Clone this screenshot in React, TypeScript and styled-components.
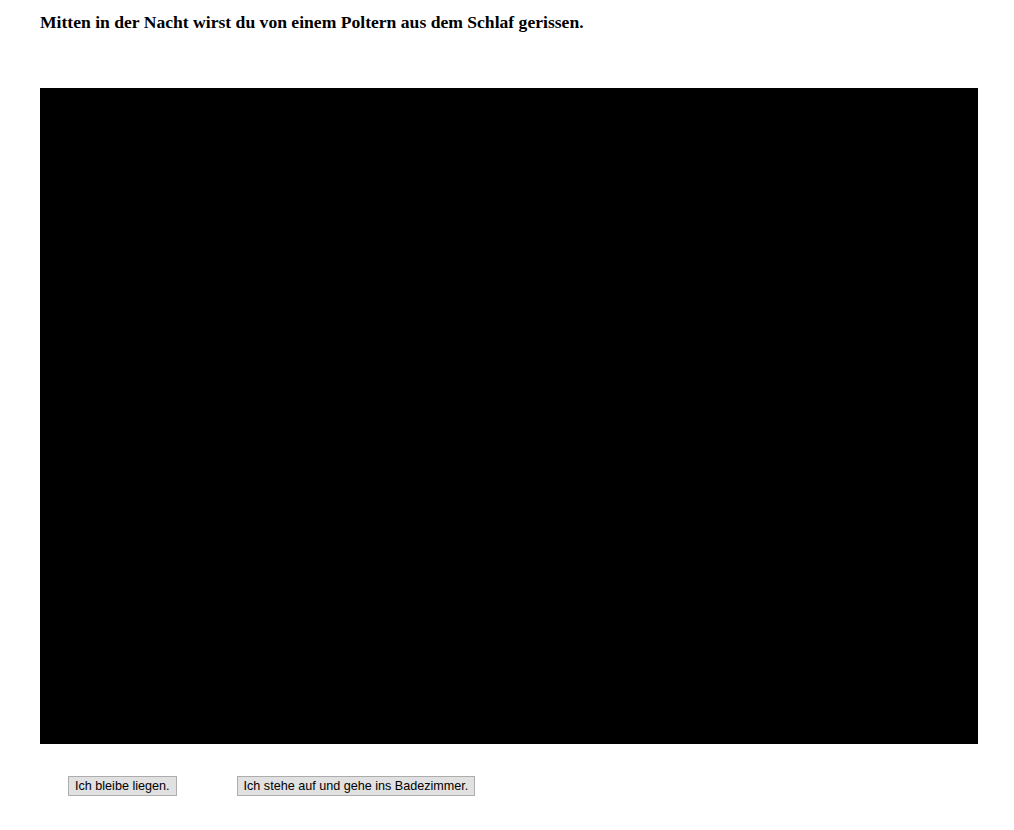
import React from "react";
import styled, { createGlobalStyle } from "styled-components";

const Global = createGlobalStyle`
  html, body { margin: 0; padding: 0; background: #fff; }
  body { font-family: "Liberation Serif", "Times New Roman", serif; color: #000; }
`;

const Page = styled.div`
  padding: 11px 36px 0 40px;
  display: flex;
  flex-direction: column;
`;

const Heading = styled.h3`
  margin: 0;
  font-family: "Liberation Serif", "Times New Roman", serif;
  font-weight: bold;
  font-size: 17.6px;
  line-height: 22px;
`;

const Scene = styled.div`
  margin-top: 55px;
  width: 938px;
  height: 656px;
  background: #000;
`;

const Choices = styled.div`
  display: flex;
  gap: 60px;
  margin-top: 32px;
  padding-left: 28px;
`;

const Choice = styled.button`
  height: 20px;
  padding: 0 6px;
  font-family: "Liberation Sans", Arial, sans-serif;
  font-size: 12.6px;
  color: #000;
  background: #e1e1e1;
  border: 1px solid #adadad;
  border-radius: 0;
  line-height: 18px;
  cursor: pointer;
`;

export default function App() {
  return (
    <>
      <Global />
      <Page>
        <Heading>Mitten in der Nacht wirst du von einem Poltern aus dem Schlaf gerissen.</Heading>
        <Scene />
        <Choices>
          <Choice>Ich bleibe liegen.</Choice>
          <Choice>Ich stehe auf und gehe ins Badezimmer.</Choice>
        </Choices>
      </Page>
    </>
  );
}
